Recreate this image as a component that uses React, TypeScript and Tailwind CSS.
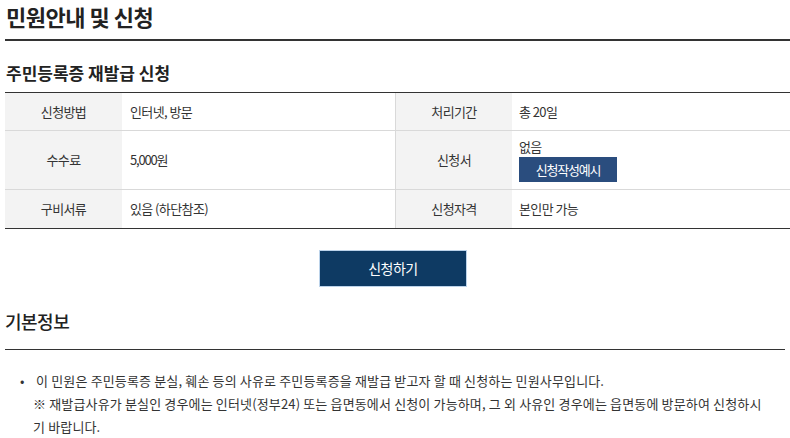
import React from 'react';

const font = "font-['Noto_Sans_CJK_KR','Noto_Sans',sans-serif]";

const InfoRow: React.FC<{
  label1: string;
  value1: React.ReactNode;
  label2: string;
  value2: React.ReactNode;
  height: string;
  last?: boolean;
}> = ({ label1, value1, label2, value2, height, last }) => (
  <div className={`flex ${height} ${last ? '' : 'border-b border-[#d9d9d9]'}`}>
    <div className="w-[117px] shrink-0 bg-[#f3f3f3] flex items-center justify-center">{label1}</div>
    <div className="w-[273px] shrink-0 flex items-center pl-[8px]">{value1}</div>
    <div className="w-[117px] shrink-0 bg-[#f3f3f3] border-l border-[#d9d9d9] flex items-center justify-center">
      {label2}
    </div>
    <div className="flex-1 flex items-center pl-[7px]">{value2}</div>
  </div>
);

const App: React.FC = () => {
  return (
    <div className={`min-h-screen bg-white pl-[5px] text-[#333] ${font}`}>
      {/* Page title */}
      <div className="border-b-2 border-[#333] pb-[7px]">
        <h1 className="text-[22px] leading-[32px] font-bold tracking-[-0.5px] text-[#222] pl-[1px]">
          민원안내 및 신청
        </h1>
      </div>

      <h2 className="mt-[19px] mb-[6px] text-[17px] leading-[26px] font-bold tracking-[0px] text-[#222] pl-[1px]">
        주민등록증 재발급 신청
      </h2>

      {/* Summary table */}
      <div className="border-t border-b border-[#333] text-[13px] tracking-[-0.6px] text-[#333]">
        <InfoRow label1="신청방법" value1="인터넷, 방문" label2="처리기간" value2="총 20일" height="h-[38px]" />
        <InfoRow
          label1="수수료"
          value1={<span className="tracking-[-1.2px]">5,000원</span>}
          label2="신청서"
          height="h-[59px]"
          value2={
            <div className="flex flex-col items-start">
              <span className="leading-[18px]">없음</span>
              <button className="mt-[1px] w-[98px] h-[25px] bg-[#2a4d7e] text-white text-[13px] tracking-[-1.2px]">
                신청작성예시
              </button>
            </div>
          }
        />
        <InfoRow label1="구비서류" value1="있음 (하단참조)" label2="신청자격" value2="본인만 가능" height="h-[38px]" last />
      </div>

      <div className="flex justify-center mt-[21px] pr-[9px]">
        <button className="w-[148px] h-[37px] bg-[#0e3a63] border border-[#bcd3ea] text-white text-[14px] tracking-[-0.5px]">
          신청하기
        </button>
      </div>

      {/* Basic info */}
      <div className="mt-[21px] mr-[5px] border-b border-[#333] pb-[15px]">
        <h3 className="text-[18px] leading-[26px] font-medium tracking-[-0.5px] text-[#222]">기본정보</h3>
      </div>

      <div className="mt-[19px] pl-[15px] flex text-[13px] leading-[23px] tracking-[0.15px] text-[#333]">
        <span className="w-[13px] shrink-0">•</span>
        <div className="whitespace-nowrap">
          <div>&nbsp;이 민원은 주민등록증 분실, 훼손 등의 사유로 주민등록증을 재발급 받고자 할 때 신청하는 민원사무입니다.</div>
          <div>※ 재발급사유가 분실인 경우에는 인터넷(정부24) 또는 읍면동에서 신청이 가능하며, 그 외 사유인 경우에는 읍면동에 방문하여 신청하시</div>
          <div>기 바랍니다.</div>
        </div>
      </div>
    </div>
  );
};

export default App;
